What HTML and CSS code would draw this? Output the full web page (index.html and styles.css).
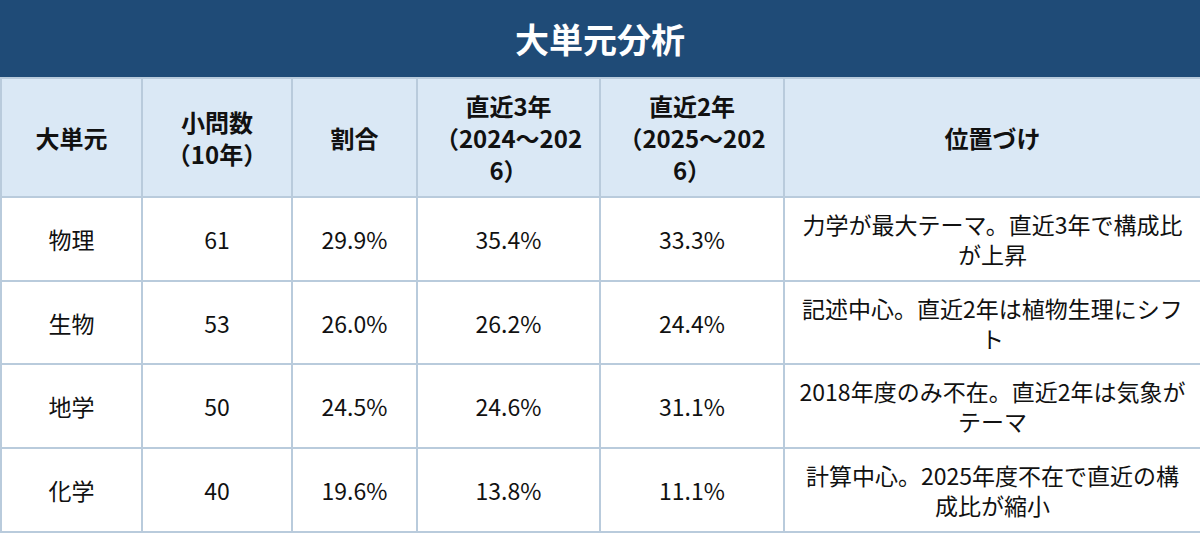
FILE: index.html
```html
<!DOCTYPE html>
<html lang="ja">
<head>
<meta charset="utf-8">
<title>大単元分析</title>
<link rel="stylesheet" href="styles.css">
</head>
<body>
<div class="panel">
  <div class="title">大単元分析</div>
  <table class="grid">
    <colgroup>
      <col class="c1"><col class="c2"><col class="c3"><col class="c4"><col class="c5"><col class="c6">
    </colgroup>
    <thead>
      <tr>
        <th>大単元</th>
        <th>小問数<br>（10年）</th>
        <th>割合</th>
        <th>直近3年<br>（2024～2026）</th>
        <th>直近2年<br>（2025～2026）</th>
        <th>位置づけ</th>
      </tr>
    </thead>
    <tbody>
      <tr>
        <td>物理</td><td>61</td><td>29.9%</td><td>35.4%</td><td>33.3%</td>
        <td>力学が最大テーマ。直近3年で構成比が上昇</td>
      </tr>
      <tr>
        <td>生物</td><td>53</td><td>26.0%</td><td>26.2%</td><td>24.4%</td>
        <td>記述中心。直近2年は植物生理にシフト</td>
      </tr>
      <tr>
        <td>地学</td><td>50</td><td>24.5%</td><td>24.6%</td><td>31.1%</td>
        <td>2018年度のみ不在。直近2年は気象がテーマ</td>
      </tr>
      <tr>
        <td>化学</td><td>40</td><td>19.6%</td><td>13.8%</td><td>11.1%</td>
        <td>計算中心。2025年度不在で直近の構成比が縮小</td>
      </tr>
    </tbody>
  </table>
</div>
</body>
</html>
```
FILE: styles.css
```css
html, body {
  margin: 0;
  padding: 0;
  background: #ffffff;
}
body {
  font-family: "Noto Sans CJK JP", "Noto Sans", sans-serif;
  color: #111111;
  overflow: hidden;
}
.panel {
  width: 1200px;
}
.title {
  height: 77px;
  background: #1f4b77;
  color: #ffffff;
  font-weight: 700;
  font-size: 34px;
  line-height: 77px;
  text-align: center;
}
.grid {
  width: 1200px;
  border-collapse: collapse;
  table-layout: fixed;
}
.c1 { width: 141px; }
.c2 { width: 150px; }
.c3 { width: 125px; }
.c4 { width: 183px; }
.c5 { width: 184px; }
.c6 { width: 417px; }
.grid th,
.grid td {
  border: 2px solid #b9cbdc;
  text-align: center;
  vertical-align: middle;
  padding: 0 12px;
}
.grid th {
  background: #dae8f5;
  font-weight: 700;
  font-size: 24px;
  line-height: 32px;
  height: 119px;
  box-sizing: border-box;
  padding: 0 14px;
  word-break: break-all;
}
.grid td {
  font-size: 23px;
  line-height: 30px;
  height: 83.7px;
  box-sizing: border-box;
}
```
